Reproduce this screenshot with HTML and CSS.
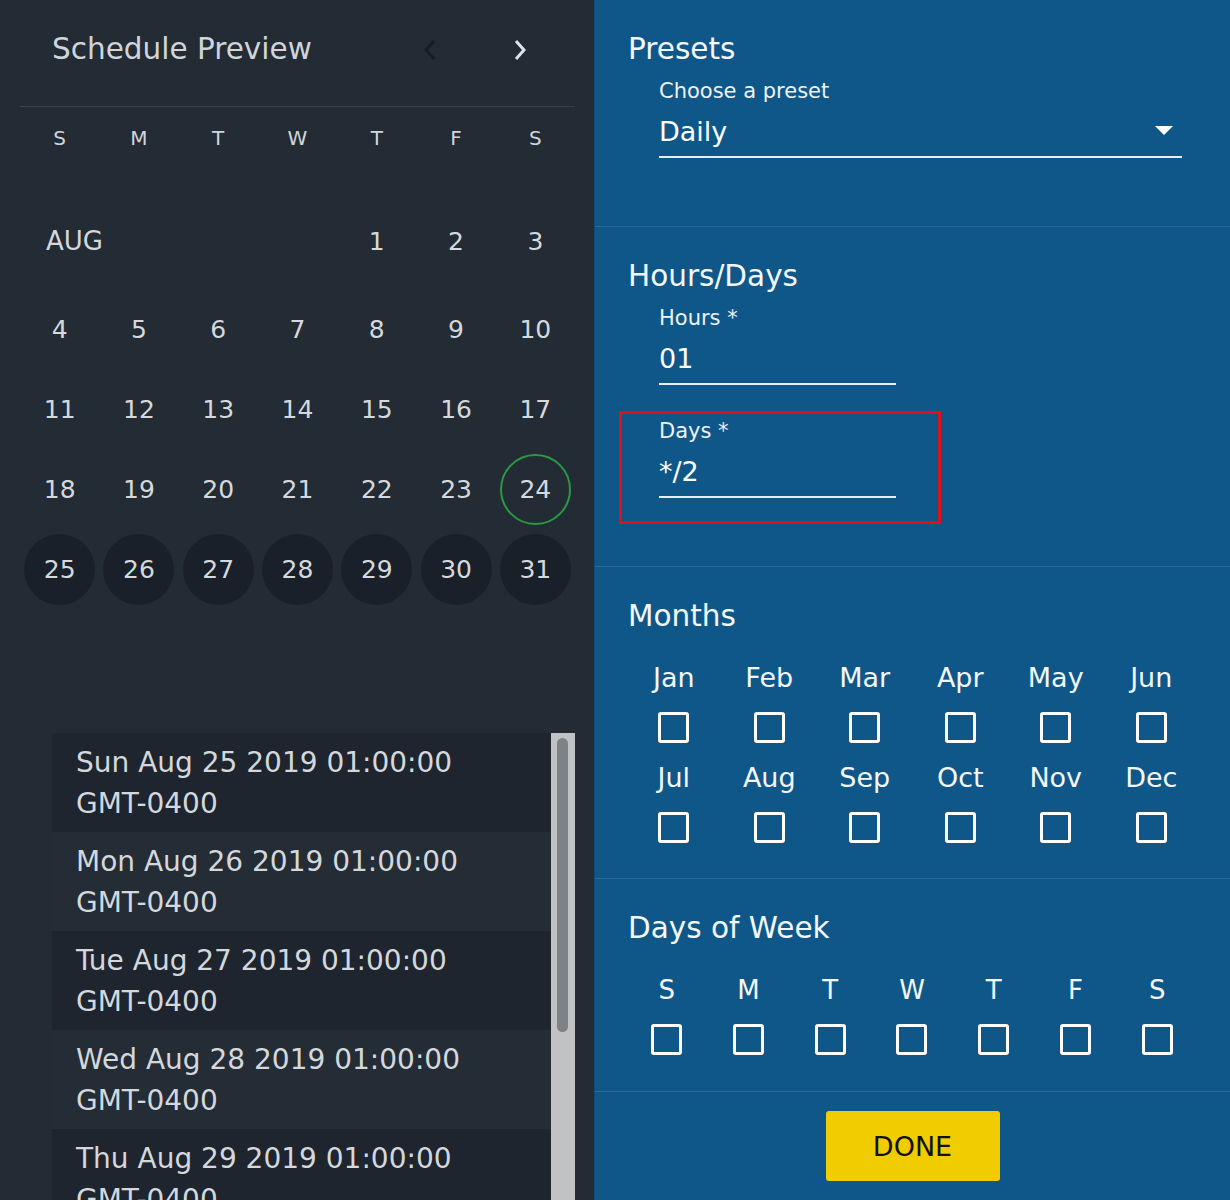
FILE: index.html
```html
<!DOCTYPE html>
<html lang="en">
<head>
<meta charset="utf-8">
<title>Schedule Preview</title>
<link rel="stylesheet" href="styles.css">
</head>
<body>
<div class="app">
  <section class="preview">
    <header class="cal-head">
      <h1 class="cal-title">Schedule Preview</h1>
      <button class="nav nav-prev" disabled aria-label="Previous month">
        <svg width="16" height="24" viewBox="0 0 16 24"><polyline points="12,3 4,12 12,21" fill="none" stroke="currentColor" stroke-width="3"/></svg>
      </button>
      <button class="nav nav-next" aria-label="Next month">
        <svg width="16" height="24" viewBox="0 0 16 24"><polyline points="4,3 12,12 4,21" fill="none" stroke="currentColor" stroke-width="3"/></svg>
      </button>
    </header>

    <div class="weekdays">
      <span>S</span><span>M</span><span>T</span><span>W</span><span>T</span><span>F</span><span>S</span>
    </div>

    <div class="month">
      <div class="week week-first">
        <div class="month-name">AUG</div>
        <div class="day"><span>1</span></div>
        <div class="day"><span>2</span></div>
        <div class="day"><span>3</span></div>
      </div>
      <div class="week">
        <div class="day"><span>4</span></div>
        <div class="day"><span>5</span></div>
        <div class="day"><span>6</span></div>
        <div class="day"><span>7</span></div>
        <div class="day"><span>8</span></div>
        <div class="day"><span>9</span></div>
        <div class="day"><span>10</span></div>
      </div>
      <div class="week">
        <div class="day"><span>11</span></div>
        <div class="day"><span>12</span></div>
        <div class="day"><span>13</span></div>
        <div class="day"><span>14</span></div>
        <div class="day"><span>15</span></div>
        <div class="day"><span>16</span></div>
        <div class="day"><span>17</span></div>
      </div>
      <div class="week">
        <div class="day"><span>18</span></div>
        <div class="day"><span>19</span></div>
        <div class="day"><span>20</span></div>
        <div class="day"><span>21</span></div>
        <div class="day"><span>22</span></div>
        <div class="day"><span>23</span></div>
        <div class="day"><span class="today">24</span></div>
      </div>
      <div class="week">
        <div class="day"><span class="scheduled">25</span></div>
        <div class="day"><span class="scheduled">26</span></div>
        <div class="day"><span class="scheduled">27</span></div>
        <div class="day"><span class="scheduled">28</span></div>
        <div class="day"><span class="scheduled">29</span></div>
        <div class="day"><span class="scheduled">30</span></div>
        <div class="day"><span class="scheduled">31</span></div>
      </div>
    </div>

    <div class="dates-wrap">
      <ul class="dates">
        <li>Sun Aug 25 2019 01:00:00 <span class="tz">GMT-0400</span></li>
        <li>Mon Aug 26 2019 01:00:00 <span class="tz">GMT-0400</span></li>
        <li>Tue Aug 27 2019 01:00:00 <span class="tz">GMT-0400</span></li>
        <li>Wed Aug 28 2019 01:00:00 <span class="tz">GMT-0400</span></li>
        <li>Thu Aug 29 2019 01:00:00 <span class="tz">GMT-0400</span></li>
        <li>Fri Aug 30 2019 01:00:00 <span class="tz">GMT-0400</span></li>
        <li>Sat Aug 31 2019 01:00:00 <span class="tz">GMT-0400</span></li>
      </ul>
      <div class="scrollbar" aria-hidden="true"><div class="scroll-thumb"></div></div>
    </div>
  </section>

  <section class="settings">
    <div class="group group-presets">
      <h2 class="group-title">Presets</h2>
      <div class="field field-wide">
        <div class="field-label">Choose a preset</div>
        <div class="field-input select">
          <span>Daily</span>
          <span class="caret"></span>
        </div>
      </div>
    </div>

    <div class="group group-hours">
      <h2 class="group-title">Hours/Days</h2>
      <div class="field">
        <div class="field-label">Hours *</div>
        <div class="field-input">01</div>
      </div>
      <div class="highlight">
        <div class="field">
          <div class="field-label">Days *</div>
          <div class="field-input">*/2</div>
        </div>
      </div>
    </div>

    <div class="group group-months">
      <h2 class="group-title">Months</h2>
      <div class="check-grid months-grid">
        <label class="check"><span class="check-label">Jan</span><span class="box"></span></label>
        <label class="check"><span class="check-label">Feb</span><span class="box"></span></label>
        <label class="check"><span class="check-label">Mar</span><span class="box"></span></label>
        <label class="check"><span class="check-label">Apr</span><span class="box"></span></label>
        <label class="check"><span class="check-label">May</span><span class="box"></span></label>
        <label class="check"><span class="check-label">Jun</span><span class="box"></span></label>
        <label class="check"><span class="check-label">Jul</span><span class="box"></span></label>
        <label class="check"><span class="check-label">Aug</span><span class="box"></span></label>
        <label class="check"><span class="check-label">Sep</span><span class="box"></span></label>
        <label class="check"><span class="check-label">Oct</span><span class="box"></span></label>
        <label class="check"><span class="check-label">Nov</span><span class="box"></span></label>
        <label class="check"><span class="check-label">Dec</span><span class="box"></span></label>
      </div>
    </div>

    <div class="group group-week">
      <h2 class="group-title">Days of Week</h2>
      <div class="check-grid week-grid">
        <label class="check"><span class="check-label">S</span><span class="box"></span></label>
        <label class="check"><span class="check-label">M</span><span class="box"></span></label>
        <label class="check"><span class="check-label">T</span><span class="box"></span></label>
        <label class="check"><span class="check-label">W</span><span class="box"></span></label>
        <label class="check"><span class="check-label">T</span><span class="box"></span></label>
        <label class="check"><span class="check-label">F</span><span class="box"></span></label>
        <label class="check"><span class="check-label">S</span><span class="box"></span></label>
      </div>
    </div>

    <div class="actions">
      <button class="done">DONE</button>
    </div>
  </section>
</div>
</body>
</html>
```

FILE: styles.css
```css
html, body {
  margin: 0;
  padding: 0;
  width: 1230px;
  height: 1200px;
  overflow: hidden;
}

body {
  font-family: "DejaVu Sans", "Liberation Sans", sans-serif;
  background: #232b35;
}

.app {
  display: flex;
  width: 1230px;
  height: 1200px;
}

/* ---------- Left: preview ---------- */
.preview {
  width: 595px;
  height: 1200px;
  background: #232b35;
  color: #d4d8dc;
  overflow: hidden;
  flex: none;
}

.cal-head {
  margin: 0 20px;
  height: 106px;
  border-bottom: 1px solid #39424c;
  display: flex;
  align-items: flex-start;
  padding: 0 30px 0 32px;
}

.cal-title {
  margin: 32px 0 0;
  font-size: 29.5px;
  font-weight: normal;
  line-height: 34px;
  color: #d0d5da;
  flex: 1;
}

.nav {
  width: 50px;
  height: 40px;
  margin-top: 30px;
  padding: 0;
  border: 0;
  background: transparent;
  display: flex;
  align-items: center;
  justify-content: center;
  color: #dfe2e5;
}

.nav svg { display: block; width: 16px; height: 24px; }

.nav-prev { color: #171d25; margin-right: 40px; }

.weekdays {
  margin: 0 20px;
  height: 62px;
  display: grid;
  grid-template-columns: repeat(7, 1fr);
  align-items: center;
  text-align: center;
  font-size: 20px;
  color: #d2d6da;
}

.month {
  margin: 32px 20px 0;
}

.week {
  display: grid;
  grid-template-columns: repeat(7, 1fr);
  height: 80px;
}

.week-first { margin-bottom: 8px; }

.month-name {
  grid-column: 1 / span 4;
  display: flex;
  align-items: center;
  padding-left: 26px;
  font-size: 26px;
  color: #d4d8dc;
}

.day {
  display: flex;
  align-items: center;
  justify-content: center;
  font-size: 25px;
  color: #d6d9dc;
}

.day span {
  display: flex;
  align-items: center;
  justify-content: center;
  width: 71px;
  height: 71px;
  border-radius: 50%;
  box-sizing: border-box;
}

.day .today { border: 2px solid #2a9a41; }

.day .scheduled { background: #19202a; }

.dates-wrap {
  display: flex;
  margin: 124px 0 0 52px;
  width: 523px;
  height: 467px;
}

.dates {
  list-style: none;
  margin: 0;
  padding: 0;
  flex: 1;
  overflow: hidden;
  font-size: 28px;
  line-height: 41px;
  color: #d4d8dc;
}

.dates li {
  height: 99px;
  box-sizing: border-box;
  padding: 9px 16px 0 24px;
  background: #242c36;
}

.dates li:nth-child(odd) { background: #1e252e; }

.tz { white-space: nowrap; }

.scrollbar {
  width: 24px;
  flex: none;
  background: #c1c2c3;
  padding: 5px 7px 0 6px;
  box-sizing: border-box;
}

.scroll-thumb {
  height: 294px;
  border-radius: 6px;
  background: #7e8284;
}

/* ---------- Right: settings ---------- */
.settings {
  flex: 1;
  height: 1200px;
  background: #0f5789;
  color: #ffffff;
  border-left: 1px solid #0c4c79;
  margin-left: -1px;
}

.group {
  padding: 32px 0 0 33px;
  border-bottom: 1px solid #2a6a99;
  box-sizing: border-box;
}

.group-presets { height: 227px; }
.group-hours { height: 340px; }
.group-months { height: 312px; }
.group-week { height: 213px; }

.group-title {
  margin: 0;
  font-size: 29.5px;
  font-weight: normal;
  line-height: 34px;
  color: #f4f7fa;
}

.field {
  margin-left: 31px;
  width: 237px;
}

.field-wide { width: 523px; }

.field-label {
  margin-top: 13px;
  font-size: 21px;
  line-height: 24px;
  color: #eef2f6;
}

.field-input {
  margin-top: 13px;
  font-size: 27px;
  line-height: 32px;
  padding-bottom: 8px;
  border-bottom: 2px solid #e8eef4;
  color: #ffffff;
}

.select {
  display: flex;
  align-items: center;
  justify-content: space-between;
}

.caret {
  width: 0;
  height: 0;
  border-left: 9px solid transparent;
  border-right: 9px solid transparent;
  border-top: 9px solid #ffffff;
  margin-right: 9px;
  margin-top: -3px;
}

.highlight {
  margin: 26px 0 0 -9px;
  width: 322px;
  height: 113px;
  box-sizing: border-box;
  border: 3px solid #e2101c;
  padding: 5px 0 0 6px;
}

.highlight .field-label { margin-top: 0; }

.check-grid {
  display: grid;
  margin-left: -2px;
  row-gap: 19px;
}

.months-grid {
  width: 573px;
  margin-top: 29px;
  grid-template-columns: repeat(6, 1fr);
}

.week-grid {
  width: 572px;
  margin-top: 30px;
  grid-template-columns: repeat(7, 1fr);
}

.check {
  display: flex;
  flex-direction: column;
  align-items: center;
}

.check-label {
  font-size: 27px;
  line-height: 32px;
  margin-bottom: 18px;
  color: #f4f7fa;
}

.week-grid .check-label {
  font-size: 26px;
  line-height: 30px;
  margin-bottom: 19px;
}

.box {
  display: block;
  width: 31px;
  height: 31px;
  box-sizing: border-box;
  border: 3.5px solid #ffffff;
  border-radius: 3px;
}

.actions {
  display: flex;
  justify-content: center;
  padding-top: 19px;
}

.done {
  width: 174px;
  height: 70px;
  border: 0;
  border-radius: 3px;
  background: #f0cc00;
  color: #111111;
  font-family: "DejaVu Sans", "Liberation Sans", sans-serif;
  font-size: 27px;
  padding: 0;
}
```
